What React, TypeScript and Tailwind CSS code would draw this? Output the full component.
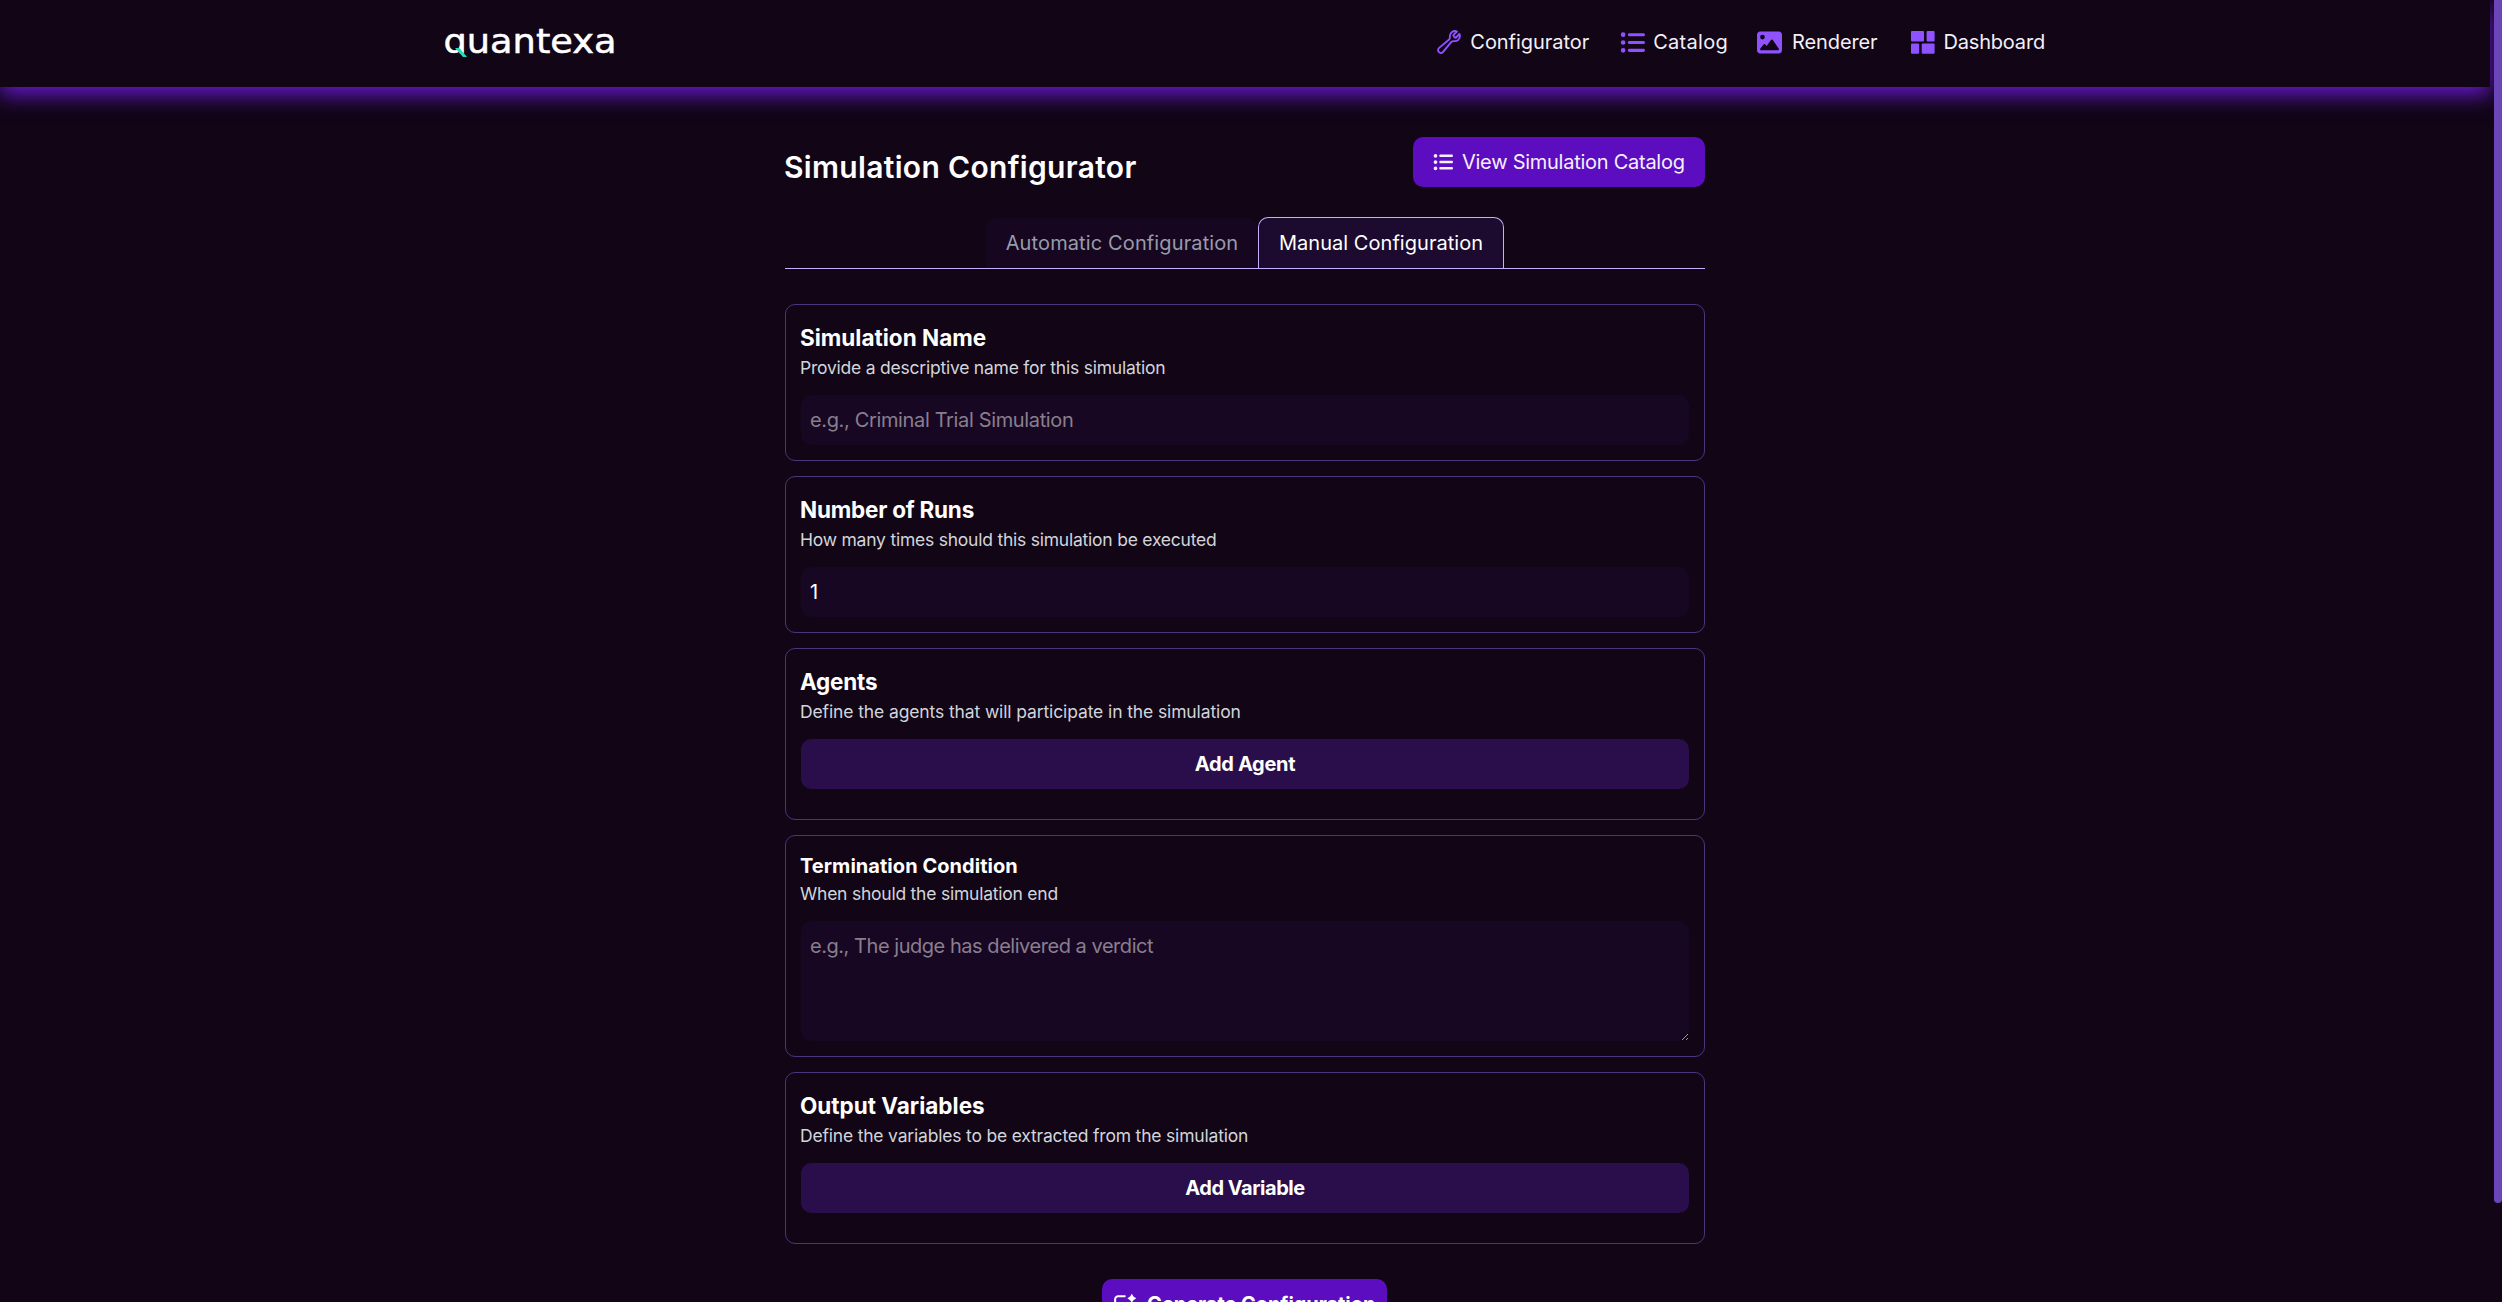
import type { ReactNode } from "react";
import { FaImage, FaListUl } from "react-icons/fa6";
import { RiAiGenerate } from "react-icons/ri";

function Logo() {
  return (
    <div className="h-8 w-[172px]">
      <svg className="block h-8 w-[172px] overflow-visible" viewBox="0 0 172 32">
        <text
          x="-1.5"
          y="27.4"
          textLength="173"
          lengthAdjust="spacingAndGlyphs"
          fill="#ffffff"
          stroke="#ffffff"
          strokeWidth="0.5"
          className="font-['DejaVu_Sans',sans-serif] text-[33px]"
        >
          quantexa
        </text>
        <rect x="0" y="27.5" width="24" height="9" fill="#110516" />
        <path d="M10 22H14.4L22 31H18Z" fill="#1fe0bd" />
      </svg>
    </div>
  );
}

function WrenchIcon() {
  return (
    <svg className="size-6" viewBox="1.3 1.3 21.4 21.4" fill="none" stroke="currentColor" strokeWidth="1.7" strokeLinecap="round" strokeLinejoin="round">
      <path d="M21.75 6.75a4.5 4.5 0 0 1-4.884 4.484c-1.076-.091-2.264.071-2.95.904l-7.152 8.684a2.548 2.548 0 1 1-3.586-3.586l8.684-7.152c.833-.686.995-1.874.904-2.95a4.5 4.5 0 0 1 6.336-4.486l-3.276 3.276a3.004 3.004 0 0 0 2.25 2.25l3.276-3.276c.256.565.398 1.192.398 1.852Z" />
    </svg>
  );
}

function DashboardIcon() {
  return (
    <svg className="h-[23px] w-6" viewBox="0 0 24 23" fill="currentColor">
      <rect x="0" y="0" width="13" height="10.4" rx="1" />
      <rect x="15.6" y="0" width="8" height="10.4" rx="1" />
      <rect x="0" y="12.4" width="8.2" height="10.4" rx="1" />
      <rect x="10.7" y="12.4" width="12.9" height="10.4" rx="1" />
    </svg>
  );
}

function NavItem({ icon, children, className }: { icon: ReactNode; children: ReactNode; className: string }) {
  return (
    <a className={"flex items-center whitespace-nowrap text-xl leading-[30px] text-[#f3f0f6] " + className}>
      <span className="flex text-[25px] text-[#8f52ff]">{icon}</span>
      {children}
    </a>
  );
}

function Card({
  title,
  titleClass,
  description,
  descriptionClass,
  className = "",
  children,
}: {
  title: string;
  titleClass: string;
  description: string;
  descriptionClass: string;
  className?: string;
  children: ReactNode;
}) {
  return (
    <section className={"rounded-[10px] border border-[#4e347d] p-[15px] " + className}>
      <h2 className={"-ml-px font-bold text-white " + titleClass}>{title}</h2>
      <p className={"-ml-px mb-[15px] text-[17.5px] leading-[25px] text-[#d1d5db] " + descriptionClass}>{description}</p>
      {children}
    </section>
  );
}

const field = "block w-full rounded-[10px] bg-[#180723] px-[9px] text-xl leading-[30px] text-white outline-none placeholder:text-[#887f8e]";
const addButton = "block h-[50px] w-full rounded-[10px] bg-[#2a0d4b] text-center text-xl font-bold leading-[50px] text-white";

export default function App() {
  return (
    <div className="flex h-[1302px] w-[2502px] overflow-hidden bg-[#110516] font-['Inter',sans-serif] text-white">
      <div className="w-[2494px] overflow-hidden pr-1">
        <header className="h-[87px] shadow-[0_8px_20px_#6619cc]">
          <div className="mx-auto flex h-[84px] w-[1600px] items-center justify-between">
            <Logo />
            <nav className="flex items-center">
              <NavItem icon={<WrenchIcon />} className="mr-[31px] gap-[9px] tracking-[-0.05px]">Configurator</NavItem>
              <NavItem icon={<FaListUl />} className="mr-[29px] gap-[8px] tracking-[0.3px]">Catalog</NavItem>
              <NavItem icon={<FaImage />} className="mr-[34px] gap-[10px] tracking-[-0.12px]">Renderer</NavItem>
              <NavItem icon={<DashboardIcon />} className="gap-[8px] tracking-[-0.18px]">Dashboard</NavItem>
            </nav>
          </div>
        </header>

        <main className="mx-auto w-[920px] pt-[50px]">
          <div className="flex h-[50px] justify-between">
            <h1 className="-ml-px pt-[10px] text-[30px] font-semibold leading-10 tracking-[0.32px]">Simulation Configurator</h1>
            <button className="flex h-[50px] w-[292px] items-center gap-[9px] whitespace-nowrap rounded-[10px] bg-[#5b0dbf] pl-5 text-xl tracking-[-0.26px] text-[#f6f0fc]">
              <FaListUl className="shrink-0" />
              View Simulation Catalog
            </button>
          </div>

          <div className="mt-[30px] flex h-[52px] justify-center border-b border-[#c4b0fb]">
            <button className="mt-px h-[50px] w-[272px] whitespace-nowrap rounded-t-[10px] bg-[#170620] text-xl tracking-[0.12px] text-[#969cab]">
              Automatic Configuration
            </button>
            <button className="h-[51px] w-[246px] whitespace-nowrap rounded-t-[10px] border border-b-0 border-[#c4b0fb] bg-[#1d0a2f] text-xl tracking-[0.04px]">
              Manual Configuration
            </button>
          </div>

          <div className="mt-[35px] flex flex-col gap-[15px]">
            <Card
              title="Simulation Name"
              titleClass="text-[22.5px] leading-[35px]"
              description="Provide a descriptive name for this simulation"
              descriptionClass="tracking-[-0.228px]"
            >
              <input className={field + " h-[50px] placeholder:tracking-[-0.355px]"} placeholder="e.g., Criminal Trial Simulation" />
            </Card>
            <Card
              title="Number of Runs"
              titleClass="text-[22.5px] leading-[35px] tracking-[-0.23px]"
              description="How many times should this simulation be executed"
              descriptionClass="tracking-[-0.227px]"
            >
              <input className={field + " h-[50px]"} defaultValue="1" />
            </Card>
            <Card
              title="Agents"
              titleClass="text-[22.5px] leading-[35px] tracking-[-0.2px]"
              description="Define the agents that will participate in the simulation"
              descriptionClass="tracking-[-0.117px]"
              className="pb-[30px]"
            >
              <button className={addButton + " tracking-[-0.32px]"}>Add Agent</button>
            </Card>
            <Card
              title="Termination Condition"
              titleClass="text-xl leading-[30px] tracking-[0.04px]"
              description="When should the simulation end"
              descriptionClass="tracking-[-0.229px]"
            >
              <textarea
                className={field + " h-[120px] resize-y py-2.5 placeholder:tracking-[-0.46px]"}
                placeholder="e.g., The judge has delivered a verdict"
              />
            </Card>
            <Card
              title="Output Variables"
              titleClass="text-[22.5px] leading-[35px]"
              description="Define the variables to be extracted from the simulation"
              descriptionClass="tracking-[-0.19px]"
              className="pb-[30px]"
            >
              <button className={addButton + " tracking-[-0.467px]"}>Add Variable</button>
            </Card>
          </div>

          <button className="ml-[317px] mt-[35px] flex h-[50px] w-[285px] items-center gap-2.5 whitespace-nowrap rounded-[10px] bg-[#5b0dbf] pl-2.5 text-xl font-bold tracking-[-0.06px]">
            <RiAiGenerate className="shrink-0 text-[25px]" />
            Generate Configuration
          </button>
        </main>
      </div>
      <div className="h-[1203px] w-2 rounded-b-[4px] bg-[#6b46b8]" />
    </div>
  );
}
